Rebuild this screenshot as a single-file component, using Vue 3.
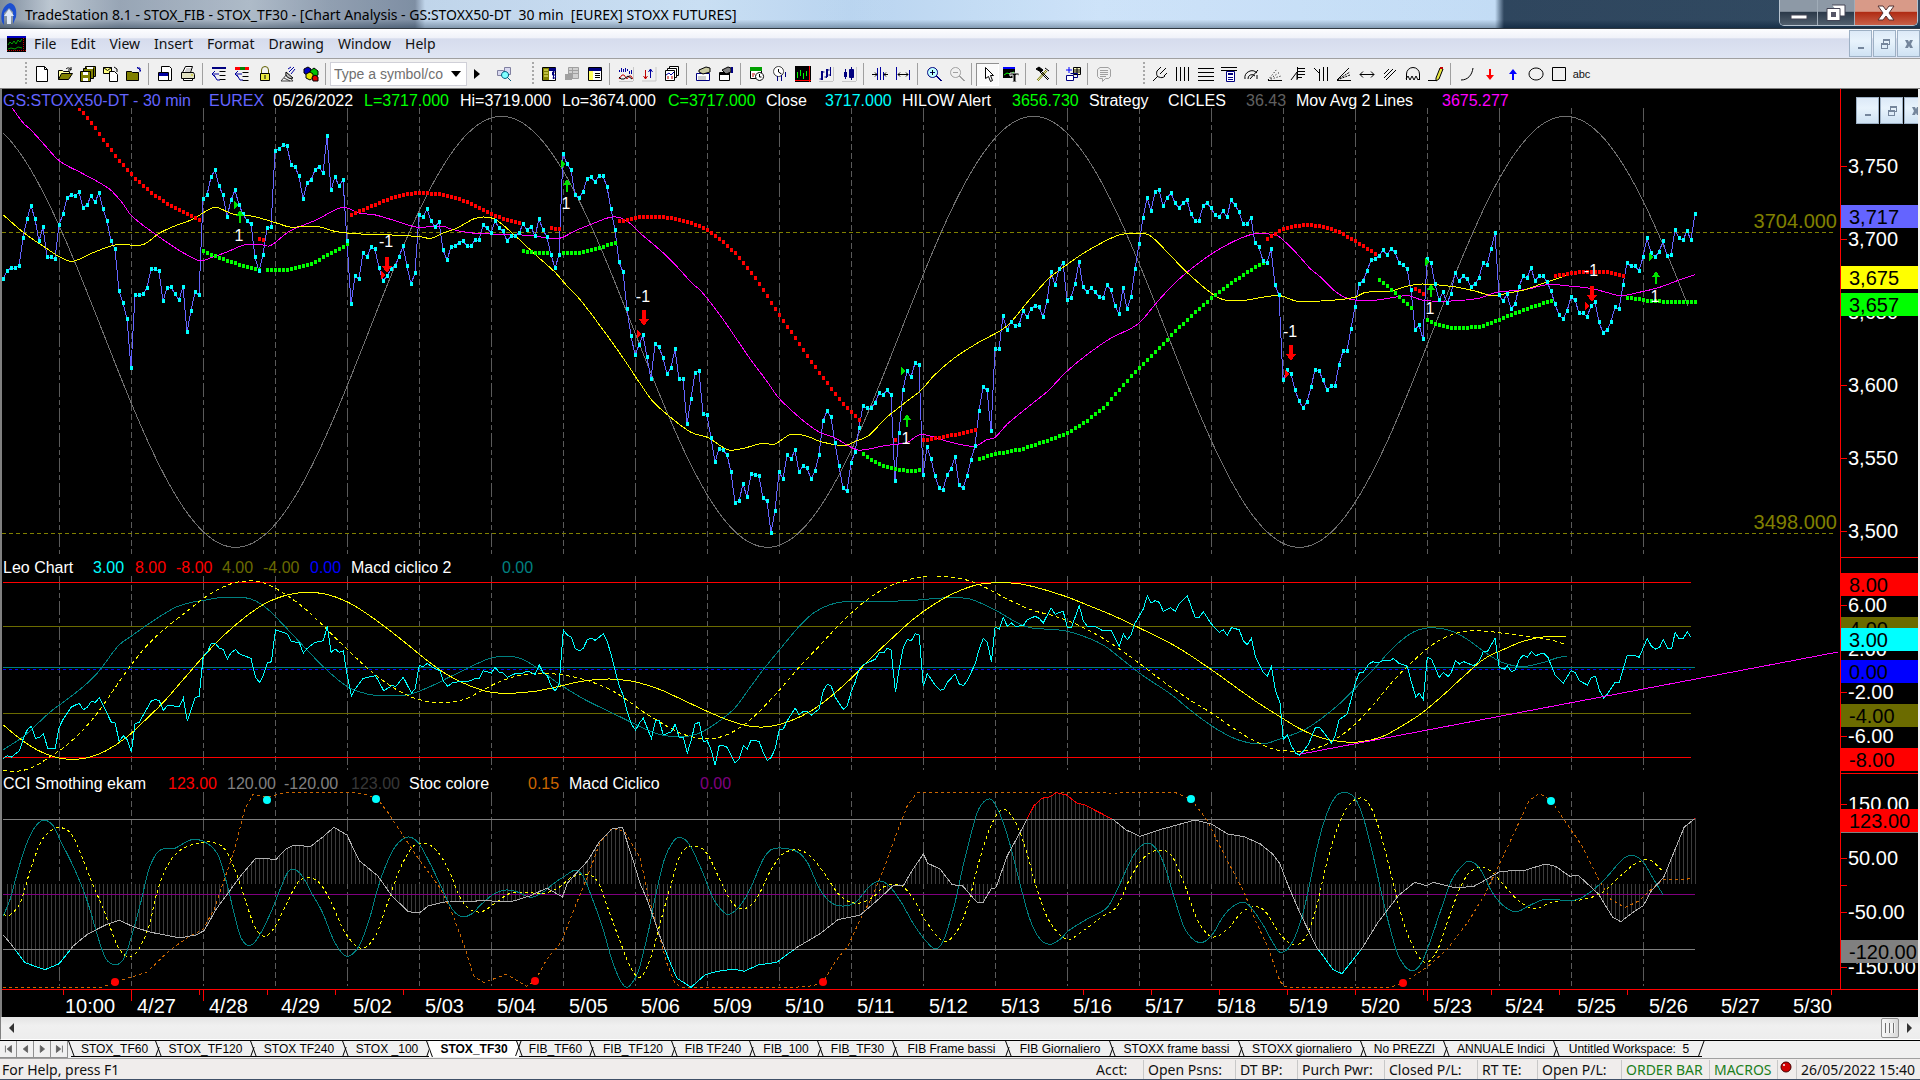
<script setup>
// Samples are stored in plotter units: 2.45 per pixel across, 3 per pixel down,
// split into sheets of 1568 units each.
const SHEET = 1568
const ux = (x, k = 0) => (x + SHEET * k) / 2.45
const BAR_START = 3
const BAR_STEP = 4

function points(top, sheets) {
  const out = []
  sheets.forEach((s, k) => {
    if (!s) return
    s.split(' ').forEach((p) => {
      const [x, y] = p.split(',').map(Number)
      out.push([ux(x, k), top + y / 3])
    })
  })
  return out
}
const r = (n) => Math.round(n * 10) / 10
const line = (pts) => 'M' + pts.map((p) => r(p[0]) + ' ' + r(p[1])).join('L')
function smooth(pts) {
  let d = 'M' + r(pts[0][0]) + ' ' + r(pts[0][1])
  for (let i = 0; i < pts.length - 1; i++) {
    const a = pts[i - 1] || pts[i]
    const b = pts[i]
    const c = pts[i + 1]
    const e = pts[i + 2] || c
    const w = (c[0] - b[0]) / 3
    const m1 = c[0] - a[0] > 0 ? (c[1] - a[1]) / (c[0] - a[0]) : 0
    const m2 = e[0] - b[0] > 0 ? (e[1] - b[1]) / (e[0] - b[0]) : 0
    d += `C${r(b[0] + w)} ${r(b[1] + m1 * w)} ${r(c[0] - w)} ${r(c[1] - m2 * w)} ${r(c[0])} ${r(c[1])}`
  }
  return d
}
function valueAt(pts, x) {
  for (let i = 0; i < pts.length - 1; i++) {
    const [x0, y0] = pts[i]
    const [x1, y1] = pts[i + 1]
    if (x >= x0 && x <= x1) return x1 === x0 ? y1 : y0 + ((y1 - y0) * (x - x0)) / (x1 - x0)
  }
  return null
}
function squares(xy) {
  return xy.map(([x, y]) => `M${Math.round(x) - 1} ${Math.round(y) - 2}h3v4h-3z`).join('')
}
function perBar(sheets) {
  const pts = points(100, sheets)
  const out = []
  for (let i = 0; i < 424; i++) {
    const x = BAR_START + BAR_STEP * i
    const y = valueAt(pts, x) ?? (Math.abs(x - pts[0][0]) < 2 ? pts[0][1] : null)
    if (y !== null) out.push([x, y])
  }
  return out
}

/* ---------- price pane ---------- */
const closes = `540 516 507 507 501 417 360 321 360 426 384 474 474 480 378 345 297 288 291 279 327 318 291 309 282 330 366 426 450 576 612 660 807 588 588 585 567 510 510 516 606 567 564 585 603 564 699 636 579 588 300 288 234 213 261 288 354 303 273 318 345 366 375 474 516 468 387 384 156 150 138 141 198 204 231 300 252 243 213 204 222 111 273 234 261 243 426 615 531 540 462 474 444 450 507 546 531 510 501 474 441 501 555 522 348 354 330 366 384 369 453 483 444 441 432 426 441 441 423 423 378 387 402 366 387 396 426 411 411 402 375 393 384 411 360 393 414 468 507 468 165 195 213 288 297 279 240 234 249 231 231 264 330 393 489 519 630 711 768 738 708 774 840 735 744 777 825 807 750 840 840 975 900 822 816 945 948 1017 1089 1050 1053 1068 1119 1212 1206 1155 1194 1125 1128 1131 1197 1206 1302 1236 1119 1140 1068 1080 1053 1119 1101 1107 1140 1116 1068 966 936 954 1032 1101 1167 1176 1092 1059 987 921 927 927 912 882 888 873 888 1146 1002 873 816 834 792 798 1128 1044 1080 1131 1167 1173 1128 1110 1074 1158 1167 1131 1083 1041 936 864 873 996 750 750 651 693 669 681 678 636 654 630 621 624 654 606 519 558 510 492 603 597 555 489 564 579 567 579 594 597 558 573 621 645 567 630 594 510 435 357 297 336 279 273 321 297 282 312 327 312 303 345 366 366 321 312 327 348 354 336 354 303 318 339 375 375 357 432 444 486 492 450 558 588 843 813 825 873 906 927 909 864 813 816 843 873 861 861 798 756 756 690 624 555 546 516 483 480 471 453 468 450 459 492 498 510 573 693 678 720 480 492 555 603 579 612 585 522 546 531 540 564 555 537 492 498 450 402 588 606 585 630 615 564 531 537 507 546 531 531 549 576 615 648 660 636 594 603 642 642 654 621 609 669 702 693 669 624 630 558 492 501 501 516 474 417 462 474 459 426 471 468 393 417 423 396 423 345`
  .split(' ')
  .map((v, i) => [BAR_START + BAR_STEP * i, 100 + Number(v) / 3])
const closePath = line(closes)
const closeDots = squares(closes)

const cyclePath = (() => {
  const pts = []
  for (let x = 8; x <= 4143; x += 12) {
    pts.push([ux(x), 100 + (698.5 - 646.5 * Math.cos((2 * Math.PI * (x - 1229)) / 1303)) / 3])
  }
  return line(pts)
})()

const slowAverage = smooth(points(100, [
  '30,27 57,72 75,92 100,125 145,185 200,222 268,270 300,312 322,350 380,405 440,455 475,478 490,486 520,475 560,457 600,437 640,437 662,440 705,400 740,380 780,360 810,340 842,325 880,342 920,348 970,366 1020,384 1085,382 1110,392 1150,401 1200,405 1250,406 1300,410 1370,418 1410,395 1450,375 1500,354 1535,365',
  '0,402 60,465 100,515 125,550 150,577 200,655 270,780 310,845 340,897 400,965 440,1000 475,1015 530,1052 560,1050 600,1040 655,1030 685,1007 720,1014 750,1026 800,1040 825,1040 850,1022 870,1015 900,975 960,915 1000,875 1045,818 1090,772 1150,720 1200,690 1225,670 1265,612 1300,565 1340,520 1400,465 1450,430 1500,406 1550,406',
  '0,415 40,462 75,510 100,535 135,577 170,600 220,605 270,597 315,590 350,604 420,606 490,597 530,580 600,572 660,556 700,560 760,568 800,580 835,590 880,580 930,565 980,542 1017,527',
]))
const fastAverage = smooth(points(100, [
  '8,348 60,403 110,445 145,473 178,487 230,460 285,437 350,437 390,403 430,380 470,362 500,340 528,325 570,345 620,352 680,373 710,384 775,382 820,397 870,404 960,408 1030,413 1055,418 1090,400 1120,387 1160,360 1185,354 1215,362 1260,408 1310,465 1360,520 1385,555 1420,600 1470,680 1520,765',
  '0,853 30,905 70,950 125,1000 165,1015 215,1052 250,1049 300,1033 330,1035 370,1006 410,1012 440,1027 500,1040 530,1026 560,1010 600,960 640,920 690,872 720,830 770,777 830,730 900,680 950,608 1000,540 1045,498 1090,460 1150,420 1185,405 1240,405 1260,420 1300,470 1340,520 1400,583 1435,604 1480,604 1530,594',
  '0,590 40,606 100,606 160,600 185,594 210,580 270,577 310,562 350,555 430,564 480,577 520,590 560,582 600,572 640,555 700,530',
]))
const highAlert = [
  ['194,30 220,66 250,118 290,183 330,238 370,282 410,315 450,340 490,364'],
  ['635,420 647,422'],
  ['860,347 900,326 950,301 990,286 1030,282 1075,286 1120,298 1160,318 1200,345 1240,362 1276,373'],
  ['1350,388 1372,390'],
  ['1516,366 1540,363 1560,356', '0,354 50,354 80,358 130,374 165,393 200,425 240,472 280,535 310,590 340,648 380,718 420,790 460,856 500,920 539,966'],
  ['', '624,1023 628,1023'],
  ['', '693,1024 730,1017 780,1005 825,992'],
  ['', '1536,419 1555,405', '0,394 30,382 70,377 110,384 150,403 185,427 220,455 236,468'],
  ['', '', '330,570 352,585'],
  ['', '', '673,532 700,525 750,518 800,520 846,531'],
].map((s) => squares(perBar(s))).join('')
const lowAlert = [
  ['497,457 540,478 580,495 637,513'],
  ['653,513 705,513 760,495 800,470 830,450 852,435'],
  ['1281,456 1310,461 1346,462'],
  ['1379,462 1420,461 1460,450 1509,431'],
  ['', '546,1066 570,1087 600,1102 635,1112 660,1117 686,1113'],
  ['', '830,1080 870,1065 930,1052 1000,1024 1047,1002 1090,970 1140,920 1200,835 1250,775 1300,710 1350,650 1400,597 1450,550 1500,510 1530,488'],
  ['', '', '242,541 280,580 323,630'],
  ['', '', '360,663 390,679 430,688 490,683 540,660 600,631 668,603'],
  ['', '', '850,596 900,605 960,609 1018,609'],
].map((s) => squares(perBar(s))).join('')

const signals = [
  { k: 0, x: 587, arrow: 352, text: 405, up: true, tri: [577, 317] },
  { k: 0, x: 1390, arrow: 257, text: 310, up: true, tri: [1380, 195] },
  { k: 0, x: 949, arrow: 495, text: 424, up: false, tri: [938, 528] },
  { k: 1, x: 10, arrow: 655, text: 587, up: false, tri: [-2, 706] },
  { k: 1, x: 655, arrow: 962, text: 1015, up: true, tri: [645, 815] },
  { k: 2, x: 28, arrow: 760, text: 692, up: false, tri: [17, 825] },
  { k: 2, x: 371, arrow: 572, text: 625, up: true, tri: [361, 490] },
  { k: 2, x: 764, arrow: 581, text: 511, up: false, tri: [752, 620] },
  { k: 2, x: 920, arrow: 535, text: 588, up: true, tri: [908, 474] },
].map((s) => {
  const x = Math.round(ux(s.x, s.k))
  const y = Math.round(100 + s.arrow / 3)
  const tx = Math.round(ux(s.tri[0], s.k))
  const ty = Math.round(100 + s.tri[1] / 3)
  return {
    color: s.up ? '#00e400' : '#ff0000',
    arrow: s.up
      ? `M${x} ${y - 6}l4 6h-3v7h-2v-7h-3z`
      : `M${x} ${y + 9}l5 -7h-3v-9h-4v9h-3z`,
    tri: `M${tx - 2} ${ty - 4}l5 4l-5 4z`,
    label: s.up ? '1' : '-1',
    left: ((x - 3) / 1838) * 100 + '%',
    top: Math.round(100 + s.text / 3) - 88 + 'px',
  }
})

/* ---------- session grid ---------- */
const sessions = Array.from({ length: 23 }, (_, i) => ({
  x: 59.5 + 72 * i,
  dash: i % 2 ? '6 3' : '14 3 5 3',
}))

/* ---------- Leo pane ---------- */
const leo = {
  macd: smooth(points(550, [
    '8,602 60,560 120,492 160,455 205,412 240,370 290,290 321,262 370,220 430,175 470,160 500,154 540,146 600,146 630,158 660,185 700,235 750,300 800,362 850,412 900,435 940,440 1000,437 1050,415 1100,385 1150,355 1200,328 1235,322 1275,328 1320,360 1370,405 1430,450 1500,492 1550,522',
    '0,533 50,557 100,563 140,555 180,528 230,480 270,415 300,365 340,305 390,232 430,188 480,162 530,157 600,157 670,154 740,147 800,148 840,165 880,190 930,225 960,237 1040,245 1100,268 1140,292 1180,330 1230,378 1300,435 1350,485 1400,530 1450,565 1490,581 1530,584',
    '0,570 60,542 100,510 150,460 190,410 230,360 270,305 310,262 340,242 375,236 420,246 460,272 500,308 540,338 590,353 640,342 680,326 702,321',
  ])),
  slow: smooth(points(550, [
    '8,528 50,570 90,602 140,626 180,631 215,626 260,605 310,565 350,520 400,460 450,390 500,320 550,257 600,205 650,163 700,139 750,130 800,136 850,158 900,195 950,240 1000,288 1050,338 1100,380 1150,410 1200,429 1250,433 1310,427 1370,412 1430,396 1490,390 1540,395',
    '0,402 50,422 100,450 170,490 220,515 270,532 320,532 370,515 420,485 470,440 520,385 570,322 620,265 670,210 720,166 770,132 820,109 860,102 920,103 970,115 1040,141 1100,170 1160,200 1220,235 1310,290 1400,362 1460,415 1510,458',
    '0,503 50,540 100,566 150,578 200,578 250,563 300,530 350,490 400,438 450,382 500,330 550,300 600,275 650,263 702,262',
  ])),
  fast: smooth(points(550, [
    '8,664 40,667 80,655 120,625 160,592 200,547 240,490 280,420 320,350 360,290 410,233 460,185 500,147 540,118 580,100 630,97 670,115 710,145 750,182 800,240 850,300 900,357 950,405 1000,440 1050,458 1090,461 1140,450 1180,425 1230,395 1280,378 1330,373 1390,380 1440,395 1500,425 1550,465',
    '0,482 50,520 100,553 150,568 200,563 250,532 290,490 340,425 390,355 440,290 490,225 540,168 590,125 640,98 700,82 750,83 800,93 840,112 900,150 960,183 1020,203 1080,232 1150,280 1220,340 1290,405 1350,455 1400,492 1450,535 1500,572 1550,600',
    '0,604 50,607 90,597 130,575 180,530 230,465 280,392 330,332 370,290 410,262 450,248 500,246 560,255 620,264 670,275 702,287',
  ])),
  value: line(points(550, [
    '8,628 18,620 28,624 48,605 58,565 68,540 77,532 87,568 97,565 106,554 117,598 135,598 145,535 155,510 175,474 194,463 204,482 214,475 224,457 234,460 243,446 253,470 273,520 282,522 292,577 302,560 312,572 322,608 331,524 341,520 371,455 381,452 390,455 400,484 410,470 440,472 449,447 459,516 478,446 488,442 498,320 508,310 517,285 527,282 537,297 547,302 557,330 567,310 577,302 587,315 615,328 626,385 636,400 645,380 655,342 665,338 675,243 694,250 704,255 714,278 733,280 743,312 753,298 772,280 792,275 802,232 811,310 821,300 831,310 841,306 851,380 861,442 870,420 890,388 920,380 940,425 960,410 970,412 988,385 1008,432 1017,420 1027,350 1037,352 1047,343 1060,355 1078,365 1087,398 1097,412 1110,400 1150,396 1165,388 1174,388 1184,365 1204,372 1213,355 1223,370 1233,372 1243,385 1262,374 1282,372 1292,366 1311,376 1321,348 1331,372 1341,380 1351,412 1360,426 1370,405 1380,243 1390,258 1400,265 1409,298 1419,306 1429,298 1439,272 1449,268 1458,274 1478,255 1488,278 1498,320 1508,370 1517,410 1527,440 1537,490 1547,525 1557,543',
    '0,520 8,508 28,568 38,515 47,515 57,558 77,548 86,526 96,565 106,565 116,612 125,575 135,525 145,520 155,578 165,575 175,605 184,648 194,590 204,590 214,595 233,642 243,630 253,590 263,600 272,574 292,577 302,612 312,634 321,626 331,600 341,543 351,540 361,515 380,477 390,497 400,487 410,487 420,498 439,480 449,425 459,406 468,410 478,445 498,481 508,470 517,430 527,400 537,360 547,348 577,330 587,310 598,310 606,298 615,302 626,430 635,360 645,295 655,272 665,275 674,254 684,258 694,412 704,374 723,408 735,424 745,420 753,400 772,375 782,405 792,410 802,395 821,345 831,300 841,268 851,280 861,338 870,235 880,240 890,205 900,232 910,222 920,232 939,230 949,212 968,202 978,208 988,222 1007,176 1017,196 1027,190 1037,188 1047,235 1057,235 1066,205 1076,170 1086,215 1096,232 1115,232 1135,246 1155,245 1174,292 1184,255 1194,272 1204,256 1213,222 1233,180 1243,140 1252,162 1262,155 1272,160 1282,187 1300,176 1311,187 1321,165 1341,140 1360,205 1370,205 1380,188 1400,225 1419,250 1429,242 1439,260 1449,236 1468,242 1478,275 1488,287 1498,268 1508,325 1527,370 1537,382 1547,352 1557,425',
    '0,462 8,572 18,557 28,590 38,612 48,618 58,605 70,585 87,535 97,536 106,548 126,582 135,560 145,512 165,495 185,400 194,372 204,370 218,344 228,338 240,342 253,334 270,335 278,328 290,342 312,352 321,395 333,445 341,432 351,452 361,325 371,330 380,355 390,386 400,370 412,383 420,370 430,335 440,345 450,338 475,350 488,336 498,308 508,308 527,268 537,355 550,360 557,350 567,368 577,362 586,332 596,318 606,325 616,308 626,320 645,312 656,324 674,378 694,402 713,365 723,370 733,395 753,408 763,385 773,382 783,425 793,447 802,435 821,400 831,400 851,318 870,320 880,325 900,268 910,292 920,300 930,295 939,272 950,298 960,298 968,250 978,270 988,268 998,248 1007,265',
  ])),
  trend: line(points(550, ['', '', '48,616 1367,309'])),
}

/* ---------- CCI pane ---------- */
const cciPoints = points(550, [
  '8,1158 30,1190 60,1240 90,1254 110,1262 145,1244 180,1190 215,1155 260,1127 292,1114 330,1135 370,1150 440,1167 480,1158 500,1145 530,1080 560,1030 590,980 625,930 650,927 675,933 700,900 720,888 760,893 790,865 818,835 850,858 880,935 925,980 960,1040 1000,1088 1027,1092 1050,1070 1100,1056 1160,1058 1175,1054 1250,1059 1300,1040 1340,1017 1378,1044 1390,1003 1410,975 1440,935 1470,875 1500,840 1525,835 1550,930',
  '0,1003 20,1060 45,1150 70,1230 90,1287 125,1315 160,1277 190,1267 230,1260 255,1267 290,1248 335,1240 385,1195 440,1155 485,1112 540,1098 590,1045 620,1010 645,1010 665,968 694,915 705,943 735,960 765,1007 790,1010 825,1059 840,1062 860,1020 872,1016 900,920 940,830 965,770 985,748 1005,743 1020,731 1045,738 1070,762 1090,768 1160,812 1190,842 1225,862 1280,840 1360,813 1400,825 1440,855 1480,863 1520,885 1550,915',
  '0,945 20,1010 50,1095 90,1195 130,1262 152,1274 200,1200 240,1120 290,1040 330,1000 360,1010 375,1000 430,1017 475,1012 500,995 540,967 600,964 650,945 675,952 710,982 730,978 780,1035 815,1105 835,1118 865,1090 890,1070 910,1025 940,985 965,910 990,835 1017,808',
])
const cci = {
  value: line(cciPoints),
  bars: closes
    .map(([x]) => {
      const y = valueAt(cciPoints, x)
      return y === null ? '' : `M${x + 0.5} 885V${Math.round(y)}`
    })
    .join(''),
  macd: smooth(points(550, [
    '8,1100 25,1050 45,960 65,885 85,835 107,814 130,830 150,880 175,940 200,1010 220,1080 240,1165 260,1230 285,1247 305,1225 325,1150 345,1060 365,960 390,905 430,897 460,876 480,871 510,885 535,920 555,1000 575,1100 590,1165 610,1190 630,1170 660,1100 690,1010 705,970 720,961 740,980 765,1035 790,1090 820,1180 850,1222 880,1190 905,1110 925,1020 945,950 970,890 1000,864 1025,882 1050,935 1080,1010 1105,1075 1130,1103 1155,1095 1180,1065 1210,1035 1240,1023 1270,1030 1300,1045 1330,1030 1355,1005 1385,980 1410,964 1430,985 1450,1045 1475,1130 1500,1235 1520,1295 1537,1315 1555,1290',
    '0,1250 20,1150 40,1030 60,930 80,880 97,865 120,885 150,960 180,1050 205,1090 220,1096 245,1070 270,1020 300,935 320,903 345,897 385,908 410,940 440,1020 470,1062 500,1071 530,1058 560,1015 585,996 610,1010 640,1060 670,1125 700,1175 725,1200 745,1170 770,1070 790,960 810,860 830,780 858,750 880,790 905,880 930,1000 955,1110 980,1170 1005,1186 1030,1170 1050,1145 1100,1107 1145,1075 1170,1020 1200,940 1220,900 1243,882 1265,900 1285,950 1310,1050 1335,1140 1370,1181 1400,1160 1430,1100 1455,1070 1480,1060 1500,1080 1530,1135 1550,1180',
    '0,1210 25,1190 50,1120 70,1020 90,900 110,810 135,745 160,730 185,750 205,810 230,930 250,1040 270,1140 290,1220 320,1265 345,1245 370,1170 395,1080 420,995 450,945 467,937 490,960 520,1030 550,1073 580,1088 610,1070 650,1051 720,1054 760,1030 800,985 840,930 865,919 890,940 915,990 938,1036',
  ])),
  signal: smooth(points(550, [
    '8,1097 25,1097 50,1060 75,960 100,880 125,845 145,835 175,855 200,920 225,1000 250,1070 270,1135 290,1195 315,1224 340,1200 365,1130 385,1030 410,950 440,905 480,884 520,880 550,900 575,960 600,1050 625,1135 650,1162 675,1130 700,1070 730,1000 757,986 785,1005 815,1070 845,1150 885,1198 920,1160 950,1060 980,960 1010,895 1040,883 1070,905 1100,965 1125,1040 1150,1080 1180,1088 1210,1065 1250,1033 1290,1030 1330,1034 1370,1015 1400,985 1440,976 1465,1000 1490,1080 1520,1180 1545,1255',
    '0,1285 25,1230 50,1120 75,1010 100,915 135,891 165,915 195,990 225,1060 255,1079 285,1050 320,965 350,915 390,903 420,925 450,970 490,1040 530,1063 570,1045 600,1012 640,1010 670,1050 700,1115 745,1177 780,1140 805,1060 830,940 860,830 890,781 920,820 945,900 970,1010 1000,1110 1045,1171 1080,1150 1130,1105 1170,1070 1200,990 1235,925 1275,903 1305,925 1335,1010 1365,1110 1400,1163 1440,1140 1470,1095 1500,1074 1530,1085',
    '0,1155 35,1188 65,1160 90,1070 115,940 140,840 165,775 198,747 225,780 250,870 275,990 300,1110 325,1190 355,1240 385,1205 410,1120 440,1020 465,970 495,955 520,970 550,1010 580,1050 620,1079 670,1058 740,1052 790,1030 830,985 870,945 905,933 938,966',
  ])),
  stoch: line(points(550, [
    '8,1315 250,1315 282,1300 320,1285 360,1270 410,1210 460,1165 498,1140 525,1080 550,990 575,900 600,780 620,735 655,745 700,730 860,730 900,738 925,750 950,790 980,845 1020,920 1050,970 1080,1020 1110,1100 1140,1200 1160,1280 1185,1301 1240,1276 1290,1312 1311,1295 1340,1230 1375,1180 1410,1070 1440,980 1470,880 1500,838 1530,848',
    '0,925 20,1040 45,1150 65,1240 85,1300 100,1315 380,1315 425,1310 449,1298 480,1235 510,1190 540,1110 570,1040 600,950 630,850 655,770 680,730 1120,730 1160,733 1200,730 1310,730 1350,750 1390,815 1420,890 1450,960 1480,1030 1510,1120 1540,1200',
    '0,1297 12,1312 30,1315 270,1315 302,1302 360,1255 410,1200 460,1120 500,1040 540,940 580,835 610,755 635,733 665,755 700,820 740,890 780,990 810,1050 845,1076 880,1055 910,1020 940,990 990,993 1007,987',
  ])),
  dots: [
    [0, 655, 752, '#00ffff'], [0, 920, 749, '#00ffff'], [1, 1350, 749, '#00ffff'], [2, 665, 755, '#00ffff'],
    [0, 282, 1299, '#ff0000'], [0, 1311, 1296, '#ff0000'], [1, 449, 1299, '#ff0000'], [2, 302, 1302, '#ff0000'],
  ].map(([k, x, y, color]) => ({ x: Math.round(ux(x, k)), y: Math.round(550 + y / 3), color })),
}

/* ---------- pane headings ---------- */
const priceInfo = [
  ['GS:STOXX50-DT - 30 min', '#6464ff'], ['EUREX', '#6464ff'], ['05/26/2022', '#ffffff'],
  ['L=3717.000', '#00ff00'], ['Hi=3719.000', '#ffffff'], ['Lo=3674.000', '#ffffff'],
  ['C=3717.000', '#00ff00'], ['Close', '#ffffff'], ['3717.000', '#00ffff'], ['HILOW Alert', '#ffffff'],
  ['3656.730', '#00ff00'], ['Strategy', '#ffffff'], ['CICLES', '#ffffff'], ['36.43', '#606060'],
  ['Mov Avg 2 Lines', '#ffffff'], ['3675.277', '#ff00ff'],
]
const leoInfo = [
  ['Leo Chart', '#ffffff'], ['3.00', '#00ffff'], ['8.00', '#ff0000'], ['-8.00', '#ff0000'],
  ['4.00', '#6b6b00'], ['-4.00', '#6b6b00'], ['0.00', '#0000ff'], ['Macd ciclico 2', '#ffffff'], ['0.00', '#008080'],
]
const cciInfo = [
  ['CCI Smothing ekam', '#ffffff'], ['123.00', '#ff0000'], ['120.00', '#808080'], ['-120.00', '#808080'],
  ['123.00', '#383838'], ['Stoc colore', '#ffffff'], ['0.15', '#cc6600'], ['Macd Ciclico', '#ffffff'], ['0.00', '#800080'],
]

/* ---------- value axes: y from the top of the pane ---------- */
const priceScale = [[77, '3,750'], [150, '3,700'], [223, '3,650'], [296, '3,600'], [369, '3,550'], [442, '3,500']]
const priceTags = [[128, '3,717', '#6464ff'], [189, '3,675', '#ffff00'], [216, '3,657', '#00ff00']]
const leoScale = [[47, '6.00'], [91, '2.00'], [134, '-2.00'], [178, '-6.00']]
const leoTags = [
  [27, '8.00', '#ff0000'], [71, '4.00', '#6b6b00'], [82, '3.00', '#00ffff'],
  [114, '0.00', '#0000ff'], [158, '-4.00', '#6b6b00'], [202, '-8.00', '#ff0000'],
]
const cciScale = [[30, '150.00'], [84, '50.00'], [111, ''], [138, '-50.00'], [166, ''], [193, '-150.00']]
const cciTags = [[48, '120.00', '#808080'], [47, '123.00', '#ff0000'], [178, '-120.00', '#808080']]
const axes = { price: [priceScale, priceTags], leo: [leoScale, leoTags], cci: [cciScale, cciTags] }

const dates = ['10:00', '4/27', '4/28', '4/29', '5/02', '5/03', '5/04', '5/05', '5/06', '5/09', '5/10', '5/11', '5/12', '5/13', '5/16', '5/17', '5/18', '5/19', '5/20', '5/23', '5/24', '5/25', '5/26', '5/27', '5/30']
const timeTicks =
  [63, 199, 267, 335, 403, 1083, 1151, 1219, 1287, 1355, 1423, 1491, 1559, 1627, 1831].map((x) => `M${x + 0.5} 0v5`).join('') +
  [131, 203, 1427].map((x) => `M${x + 0.5} 0v11`).join('')

/* ---------- window chrome ---------- */
const menus = ['File', 'Edit', 'View', 'Insert', 'Format', 'Drawing', 'Window', 'Help']

// Every icon is a list of [path, fill, stroke] on a 16 x 16 grid.
const K = '#000'
const B = '#000080'
const G = '#a0a0a0'
const magnifier = (c, glass) => [
  ['M6.5 1.5a5 5 0 1 0 .1 0z', glass, c], ['M10 10l5 5', 'none', c], ['M11 10l5 5', 'none', c], ['M4 6.5h5', 'none', c],
]
const icons = {
  new: [['M2.5 .5h8l3 3v12h-11z', '#fff', K], ['M10.5 .5v3h3', 'none', K]],
  open: [['M1.5 13.5v-9h4l1 1h6v2', '#ffffa0', K], ['M1.5 13.5l3-6h11l-4 6z', '#808000', K], ['M9 3c2-2 4-1 5 1m0-3v3h-3', 'none', K]],
  saveAll: [['M5.5 .5h10v10h-10z', '#808000', K], ['M3.5 2.5h10v10h-10z', '#808000', K], ['M.5 5.5h10v10h-10z', '#808000', K], ['M3 6h5v3h-5zM3 12h5v3h-5z', '#fff', 'none'], ['M7 1h6v2h-6z', '#fff', 'none']],
  mailDoc: [['M.5 1.5h8v6h-8z', '#ffff80', K], ['M.5 1.5l4 3l4-3', 'none', K], ['M6.5 5.5h5l3 3v7h-8z', '#fff', K], ['M11 1l3 2v3', 'none', K]],
  folderUp: [['M.5 5.5h5l1 1h6v8h-12z', '#808000', K], ['M11 2h3v4M11 1l4 4', 'none', '#0000a0']],
  window: [['M4.5 .5h8l2 2v12h-10z', '#fff', K], ['M1.5 6.5h10v8h-10z', '#fff', K], ['M2 7h9v3h-9z', '#0000a0', 'none']],
  print: [['M5.5 .5h7l-2 6h-8z', '#fff', K], ['M1.5 6.5h12l1 2v4h-13z', '#e0e0c0', K], ['M3.5 12.5h9v2h-9z', '#fff', K], ['M6 3h5M5 5h5', 'none', G], ['M11 9h2', 'none', '#c0c000']],
  insertBar: [['M1 1h14v2h-14z', B, 'none'], ['M8.500 5.500h6M8.500 9.500h6M8.500 13.500h6', 'none', K], ['M8 8h-7m3-3l-3 3l3 3M3 9l3 5h3', 'none', '#0000a0']],
  insertColor: [['M1 1h5v3h-5z', '#ff0000', 'none'], ['M6 1h5v3h-5z', '#008000', 'none'], ['M11 1h4v3h-4z', '#ff0000', 'none'], ['M8.500 6.500h6M8.500 10.500h6M8.500 14.500h6', 'none', K], ['M8 8h-7m3-3l-3 3l3 3M3 9l3 5h3', 'none', '#0000a0']],
  lock: [['M4.500 8v-4a3.500 3.500 0 0 1 7 0v4', 'none', '#606000'], ['M3.500 7.500h9v7h-9z', '#e8e840', K], ['M8 9v4', 'none', K]],
  dish: [['M1 15l6-7l6 7zM4 12l6 3', 'none', '#404040'], ['M6 6a5 5 0 0 0 7 6z', '#c0c0c0', K], ['M9 6l5-5M11 8l4-5M8 3l3-2', 'none', '#0000a0']],
  cubes: [['M1 3l4-2l3 2v4l-4 2l-3-2z', '#0000c0', K], ['M7 5l4-3l4 3v4l-4 2l-4-2z', '#00c000', K], ['M3 8l4-2l3 2v4l-3 2l-4-2z', '#e8e800', K], ['M9 11l3-2l3 2v4h-5z', '#e00000', K]],
  find: [['M1.500 4.500h6v5h-6zM8.500 1.500h6v7h-6z', '#d8d8f0', '#8080a0'], ['M9 5.500a3.500 3.500 0 1 0 .1 0z', '#80ffff', '#006080'], ['M11 11l4 4', 'none', '#006080']],
  money: [['M1.500 1.500h13v13h-13z', '#fff', K], ['M2 2h6v12h-6z', '#808000', 'none'], ['M8 2h7v3h-7z', B, 'none'], ['M12.500 5v8m2-7h-3v3h3v3h-3', 'none', B], ['M3 4h4M3 7h4M3 10h4', 'none', '#ffff80']],
  gridOff: [['M4.500 1.500h10v11h-10z', '#d0d0d0', G], ['M4 4.500h10M4 7.500h10M8.500 1v12', 'none', G], ['M1 8h7v6h-7z', G, 'none']],
  sheet: [['M1.500 1.500h13v13h-13z', '#fff', K], ['M2 2h12v3h-12z', B, 'none'], ['M2 5h4v9h-4z', '#ffff60', 'none'], ['M8 7.500h5M8 9.500h5M8 11.500h5', 'none', K]],
  indicator: [['M1.500 6v-2m2 2v-4m2 4v-3m2 3v-4m2 3v-2m2 5v-3m2 3v-4', 'none', '#0000a0'], ['M1 13l3-4h2l3 4l2-3h2l2 3', 'none', '#c00000'], ['M1 11l2 2h3l4-3l4 3', 'none', K], ['M1 15.500h14M15.500 1v14', 'none', '#c8c8c8']],
  strategy: [['M4.500 4v9m-2-3l2 3l2-3', 'none', '#c00000'], ['M9.500 12v-9m-2 3l2-3l2 3', 'none', '#0000a0'], ['M1 15h14M15 1v14', 'none', '#c8c8c8']],
  layers: [['M5.500 .5h9v9h-9z', '#fff', K], ['M3.500 2.500h9v9h-9z', '#fff', K], ['M1.500 4.500h9v10h-9z', '#fff', K], ['M2 9l3-2l2 2l3-3', 'none', '#0000a0'], ['M4 13v-3m4 3v-3', 'none', '#c00000']],
  formatA: [['M1.500 7.500h13v7h-13z', '#fff', B], ['M4 4l7-3l4 1v4l-7 2l-4-2z', '#c8c8a0', K], ['M3 11h8M3 13h8', 'none', G]],
  formatB: [['M1.500 6.500h10v8h-10z', '#fff', K], ['M2 7h9v2h-9z', K, 'none'], ['M4 4l6-3l3 1v4l-5 2z', '#808080', K], ['M13 1h2v6h-2z', B, 'none']],
  calendar: [['M1.500 2.500h11v10h-11z', '#fff', K], ['M1 1h12v4h-12z', '#00a000', 'none'], ['M10.500 6.500a4 4 0 1 0 .1 0z', '#fff', K], ['M10.500 8v3h2', 'none', K], ['M3 8h3M3 10h2', 'none', '#c00000']],
  clock: [['M6.500 .500a5 5 0 1 0 .1 0z', '#fff', '#404040'], ['M6.500 3v3l3 2', 'none', K], ['M5.500 10v5m4-6v6m4-9v5', 'none', B]],
  blackChart: [['M0 0h16v16h-16z', K, 'none'], ['M2.500 6v6m3-8v6m3-3v6m3-8v5', 'none', '#00ff00'], ['M0 14.500h16M14.500 0v16', 'none', '#ff0000']],
  ohlc: [['M3.500 5v9m-2-1h2m0-7h3M8.500 3v9m-2-1h2m0-7h3M12.500 1v9m-2-1h2', 'none', B], ['M4.500 5v9M9.500 3v8', 'none', B], ['M1 15.500h14M15.500 1v14', 'none', '#c8c8c8']],
  candle: [['M4.500 3v10M10.500 1v13', 'none', B], ['M3 6h3v5h-3z', B, 'none'], ['M8.500 3.500h4v8h-4z', B, B], ['M1 15.500h14M15.500 1v14', 'none', '#c8c8c8']],
  squeeze: [['M5.500 2v12M8.500 1v13M11.500 6v8', 'none', '#0000a0'], ['M0 8.500h5m-2-2l2 2l-2 2M16 8.500h-4m2-2l-2 2l2 2', 'none', K]],
  spread: [['M1.500 1v13M14.500 4v10', 'none', '#0000a0'], ['M3 8.500h10m-8-2l-2 2l2 2m6-4l2 2l-2 2', 'none', K]],
  zoomIn: [...magnifier(B, '#c0ffff'), ['M6.500 4v5', 'none', K]],
  zoomOut: magnifier(G, '#f0f0f0'),
  pointer: [['M5.500 1.500v11l3-2l2 5l2-1l-2-5h3z', '#fff', K]],
  chartText: [['M0 1h12v11h-12z', K, 'none'], ['M0 1h12v2h-12z', '#0000ff', 'none'], ['M1 9l3-2l3 1l4-2', 'none', '#00ff00'], ['M7 7h9v3h-1v-1h-2v6h1v1h-5v-1h1v-6h-2v1h-1z', K, '#f0f0f0']],
  hammer: [['M3 14l9-10', 'none', '#808000'], ['M4 15l9-10', 'none', '#808000'], ['M2 3l3-2l4 3l-2 2z', K, K], ['M6 6l8 8M7 5l8 8', 'none', K], ['M11 2l4 3', 'none', K]],
  addTable: [['M1 4h6M4 1v6', 'none', '#0000ff'], ['M8.500 1.500h7v7h-7z', '#ffffc0', K], ['M8 4h8M8 6h8M12 1v8', 'none', K], ['M1.500 9.500h7v5h-7z', '#fff', B], ['M5.500 7.500h7v4h-4', 'none', B]],
  noteOff: [['M4 1.500h8l2.500 2v7l-2 2h-3l-3 3v-3h-3l-2-2v-7z', '#f0f0f0', G], ['M4 4.500h8M4 6.500h8M4 8.500h8M4 10.500h6', 'none', G]],
  fork: [['M1 15l5-5m-1-5c-1 3 0 6 2 6c2 1 4 1 6-1M8 8l6-6M5 5l4-4M12 10l3-3', 'none', K]],
  vlines: [['M1.500 1v14m4-14v14m4-14v14m4-14v14', 'none', K]],
  hlines: [['M0 2.500h16M0 6.500h16M0 10.500h16M0 14.500h16', 'none', K]],
  calcLines: [['M0 1.500h16M0 4.500h16', 'none', K], ['M5.500 5.500h8v10h-8z', '#fff', B], ['M7 7h5v2h-5z', B, 'none'], ['M7 11.500h5M7 13.500h5', 'none', B]],
  arcs: [['M1 13a7 7 0 0 1 12-6M4 13a4 4 0 0 1 7-3M13 9v4M6 13l8-9', 'none', K]],
  fan: [['M1 14.500h14', 'none', K], ['M1 14l13-4M1 14l12-8M1 14l9-11', 'none', K, '1 2']],
  flagLines: [['M1 14l6-8v8', 'none', K], ['M8 2.500h7M8 5.500h7M8 8.500h7M8 11.500h4M7.500 1v12', 'none', K]],
  timeLines: [['M1 2l5 5M6.500 3v12M10.500 1v14M14.500 1v14', 'none', K]],
  angle: [['M1 14.500h14M1 14l12-12', 'none', K], ['M1 14l13-5M1 14l13-8', 'none', K, '2 1']],
  hArrow: [['M1 8.500h14m-11-3l-3 3l3 3m8-6l3 3l-3 3', 'none', K]],
  parallels: [['M2 12l9-9M4 14l10-10M2 8l5-5', 'none', K]],
  ghost: [['M1.500 14v-6a6.500 6.500 0 0 1 13 0v6M1 13l2-3l2 4l2-4l2 4l2-4l2 4l2-2', 'none', K]],
  pencil: [['M0 14.500h8', 'none', K], ['M8 12l4-10l3 1l-4 10l-3 2z', '#e8e840', K], ['M12 1h3v2h-3z', '#c00000', 'none']],
  arc: [['M2 14c7 0 11-5 12-12', 'none', K]],
  down: [['M7 3h2v6h3l-4 5l-4-5h3z', '#ff0000', 'none']],
  up: [['M7 14h2v-6h3l-4-5l-4 5h3z', '#0000ff', 'none']],
  ellipse: [['M8 2a7 6 0 1 0 .1 0z', 'none', K]],
  rect: [['M1.500 1.500h13v13h-13z', 'none', K]],
}
const toolsFile = [
  ['new', 'open', 'saveAll', 'mailDoc', 'folderUp'], ['window', 'print'],
  ['insertBar', 'insertColor', 'lock', 'dish', 'cubes'],
]
const toolsChart = [
  ['money', 'gridOff', 'sheet'], ['indicator', 'strategy', 'layers'], ['formatA', 'formatB'],
  ['calendar', 'clock', 'blackChart', 'ohlc', 'candle'], ['squeeze', 'spread'], ['zoomIn', 'zoomOut'],
  ['pointer', 'chartText'], ['hammer'], ['addTable'], ['noteOff'],
]
const toolsDraw = [
  ['fork', 'vlines', 'hlines', 'calcLines', 'arcs', 'fan', 'flagLines', 'timeLines', 'angle', 'hArrow', 'parallels', 'ghost', 'pencil'],
  ['arc', 'down', 'up', 'ellipse', 'rect', 'abc'],
]
const toolbars = [toolsFile, toolsChart, toolsDraw]

const mdiButtons = [
  ['Minimize', 'M4 10h6v2h-6z'],
  ['Restore', 'M5 2h7v6h-2v4h-7v-6h2zM6 4v2h4v1h1v-3zM4 8v3h5v-3z'],
  ['Close', 'M3 3h3l1 2l1-2h3l-2 4l2 4h-3l-1-2l-1 2h-3l2-4z'],
]
const tabNav = ['M4 3v8M11 3l-5 4l5 4z', 'M10 3l-5 4l5 4z', 'M5 3l5 4l-5 4z', 'M11 3v8M4 3l5 4l-5 4z']
const tabs = [
  ['STOX_TF60', 87], ['STOX_TF120', 95], ['STOX TF240', 92], ['STOX _100', 84], ['STOX_TF30', 90], ['FIB_TF60', 73],
  ['FIB_TF120', 82], ['FIB TF240', 78], ['FIB_100', 68], ['FIB_TF30', 75], ['FIB Frame bassi', 113], ['FIB Giornaliero', 104],
  ['STOXX frame bassi', 129], ['STOXX giornaliero', 122], ['No PREZZI', 83], ['ANNUALE Indici', 110], ['Untitled Workspace:  5', 146],
]
const account = ['Acct:', 'Open Psns:', 'DT BP:', 'Purch Pwr:', 'Closed P/L:', 'RT TE:', 'Open P/L:']
</script>

<template>
  <div class="app">
    <header class="titlebar">
      <svg class="logo" viewBox="0 0 18 24" aria-hidden="true">
        <path d="M2 20C0 12 3 3 10 1c5 1 7 6 6 14l-3 7V10L9 6l-5 5v12z" fill="#1c4fd0" />
        <path d="M9 7l5 7h-3v8H7v-8H4z" fill="#dfe9f8" />
      </svg>
      <h1>TradeStation 8.1 - STOX_FIB - STOX_TF30 - [Chart Analysis - GS:STOXX50-DT&nbsp; 30 min&nbsp; [EUREX] STOXX FUTURES]</h1>
      <div class="caption-buttons">
        <button type="button" class="cap min" aria-label="Minimize"><svg viewBox="0 0 20 18"><path d="M2 11h16v4H2z" fill="#fff" stroke="#445" /></svg></button>
        <button type="button" class="cap max" aria-label="Restore"><svg viewBox="0 0 20 18"><path d="M6 1h13v11h-4M1 4.500h13v12H1z" fill="#fff" stroke="#445" /><path d="M5 8h5v5H5z" fill="#556" /></svg></button>
        <button type="button" class="cap close" aria-label="Close"><svg viewBox="0 0 20 18"><path d="M2 2h5l3 4l3-4h5l-5 7l5 7h-5l-3-4l-3 4H2l5-7z" fill="#fff" stroke="#533" /></svg></button>
      </div>
    </header>

    <nav class="menubar">
      <svg class="chart-icon" viewBox="0 0 19 16" aria-hidden="true">
        <path d="M0 0h19v16H0z" fill="#000" /><path d="M0 0h19v2H0z" fill="#0000c0" />
        <path d="M1 9l2-3l2 2l2-3l2 3l2-4l2 2l2-3M1 13l3-1l4 1l3-2l4 1" fill="none" stroke="#00a000" />
        <path d="M0 14.500h19M16.500 2v14" stroke="#c00000" stroke-dasharray="1 1" />
      </svg>
      <button v-for="m in menus" :key="m" type="button">{{ m }}</button>
      <span class="mdi">
        <button v-for="b in mdiButtons" :key="b[0]" type="button" :aria-label="b[0]">
          <svg viewBox="0 0 14 14"><path :d="b[1]" fill="#75869c" fill-rule="evenodd" /></svg>
        </button>
      </span>
    </nav>

    <div class="toolbar" role="toolbar" aria-label="Main">
      <template v-for="(bar, bi) in toolbars" :key="bi">
        <span class="grip"></span>
        <template v-for="(group, gi) in bar" :key="gi">
          <span v-if="gi" class="sep"></span>
          <button v-for="name in group" :key="name" type="button" class="tool" :class="{ pressed: name === 'pointer' }" :aria-label="name">
            <span v-if="name === 'abc'" class="abc">abc</span>
            <svg v-else viewBox="0 0 16 16">
              <path v-for="(s, si) in icons[name]" :key="si" :d="s[0]" :fill="s[1]" :stroke="s[2]" :stroke-dasharray="s[3]" />
            </svg>
          </button>
        </template>
        <template v-if="bi === 0">
          <span class="sep"></span>
          <span class="symbol">
            <input type="text" aria-label="Symbol" placeholder="Type a symbol/co" />
            <button type="button" aria-label="Symbol list"><svg viewBox="0 0 10 6"><path d="M0 0h10l-5 6z" fill="#000" /></svg></button>
          </span>
          <button type="button" class="go" aria-label="Go"><svg viewBox="0 0 6 10"><path d="M0 0l6 5l-6 5z" fill="#000" /></svg></button>
          <button type="button" class="tool" aria-label="find">
            <svg viewBox="0 0 16 16"><path v-for="(s, si) in icons.find" :key="si" :d="s[0]" :fill="s[1]" :stroke="s[2]" /></svg>
          </button>
        </template>
        <span v-if="bi < 2" :class="bi ? 'gap-wide' : 'gap'"></span>
      </template>
    </div>

    <main class="chart">
      <section class="pane">
        <div class="plot">
          <p class="info price-info"><span v-for="(t, i) in priceInfo" :key="i" :style="{ color: t[1] }">{{ t[0] }}</span></p>
          <svg class="price-svg" viewBox="2 109 1838 449" preserveAspectRatio="none">
            <line v-for="s in sessions" :key="s.x" :x1="s.x" :x2="s.x" y1="109" y2="555" stroke="#5a5a5a" :stroke-dasharray="s.dash" />
            <path d="M2 233.500H1836M2 534.500H1836" class="ln" stroke="#808000" stroke-dasharray="4 3" />
            <path :d="cyclePath" class="ln" stroke="#707070" />
            <path :d="closePath" class="ln" stroke="#6464ff" />
            <path :d="slowAverage" class="ln" stroke="#ff00ff" />
            <path :d="fastAverage" class="ln" stroke="#ffff00" />
            <path :d="highAlert" fill="#ff0000" />
            <path :d="lowAlert" fill="#00ff00" />
            <path :d="closeDots" fill="#00ffff" />
            <g v-for="(s, i) in signals" :key="i" :fill="s.color"><path :d="s.arrow" /><path :d="s.tri" /></g>
          </svg>
          <span v-for="(s, i) in signals" :key="i" class="signal" :style="{ left: s.left, top: s.top }">{{ s.label }}</span>
          <span class="level high">3704.000</span>
          <span class="level low">3498.000</span>
        </div>
        <div class="axis">
          <span v-for="l in axes.price[0]" :key="l[0]" class="tick" :style="{ top: l[0] + 'px' }">{{ l[1] }}</span>
          <span v-for="l in axes.price[1]" :key="l[0]" class="tag" :style="{ top: l[0] + 'px', background: l[2] }">{{ l[1] }}</span>
        </div>
      </section>

      <section class="pane">
        <div class="plot">
          <p class="info leo-info"><span v-for="(t, i) in leoInfo" :key="i" :style="{ color: t[1] }">{{ t[0] }}</span></p>
          <svg class="study-svg" viewBox="2 577 1838 197" preserveAspectRatio="none">
            <line v-for="s in sessions" :key="s.x" :x1="s.x" :x2="s.x" y1="577" y2="771" stroke="#5a5a5a" :stroke-dasharray="s.dash" />
            <path d="M3 583.500H1691M3 758.500H1691" class="ln" stroke="#ff0000" />
            <path d="M3 627.500H1691M3 714.500H1691" class="ln" stroke="#6b6b00" />
            <path d="M3 668.500H1695" class="ln" stroke="#008080" />
            <path d="M3 670.500H1691" class="ln" stroke="#0000ff" stroke-dasharray="3 3" />
            <path :d="leo.macd" class="ln" stroke="#008080" />
            <path :d="leo.fast" class="ln" stroke="#ffff00" stroke-dasharray="4 3" />
            <path :d="leo.slow" class="ln" stroke="#ffff00" />
            <path :d="leo.value" class="ln" stroke="#00ffff" />
            <path :d="leo.trend" class="ln" stroke="#ff00ff" />
          </svg>
        </div>
        <div class="axis">
          <span v-for="l in axes.leo[0]" :key="l[0]" class="tick" :style="{ top: l[0] + 'px' }">{{ l[1] }}</span>
          <span v-for="l in axes.leo[1]" :key="l[0]" class="tag" :style="{ top: l[0] + 'px', background: l[2] }">{{ l[1] }}</span>
        </div>
      </section>

      <section class="pane">
        <div class="plot">
          <p class="info cci-info"><span v-for="(t, i) in cciInfo" :key="i" :style="{ color: t[1] }">{{ t[0] }}</span></p>
          <svg class="study-svg" viewBox="2 793 1838 197" preserveAspectRatio="none">
            <defs>
              <clipPath id="over"><rect x="0" y="780" width="1840" height="40" /></clipPath>
              <clipPath id="within"><rect x="0" y="820" width="1840" height="131" /></clipPath>
              <clipPath id="under"><rect x="0" y="951" width="1840" height="40" /></clipPath>
            </defs>
            <line v-for="s in sessions" :key="s.x" :x1="s.x" :x2="s.x" y1="793" y2="987" stroke="#5a5a5a" :stroke-dasharray="s.dash" />
            <path :d="cci.bars" class="ln" stroke="#3c3c3c" />
            <path d="M3 820.500H1695M3 950.500H1695" class="ln" stroke="#808080" />
            <path d="M3 895.500H1695" class="ln" stroke="#800080" />
            <path :d="cci.stoch" class="ln" stroke="#cc6600" stroke-dasharray="3 3" />
            <path :d="cci.signal" class="ln" stroke="#ffff00" stroke-dasharray="3 3" />
            <path :d="cci.macd" class="ln" stroke="#008080" />
            <path :d="cci.value" class="ln" stroke="#b0b0b0" clip-path="url(#within)" />
            <path :d="cci.value" class="ln" stroke="#ff0000" clip-path="url(#over)" />
            <path :d="cci.value" class="ln" stroke="#00ffff" clip-path="url(#under)" />
            <circle v-for="(c, i) in cci.dots" :key="i" :cx="c.x" :cy="c.y" r="4" :fill="c.color" />
          </svg>
        </div>
        <div class="axis">
          <span v-for="l in axes.cci[0]" :key="l[0]" class="tick" :style="{ top: l[0] + 'px' }">{{ l[1] }}</span>
          <span v-for="l in axes.cci[1]" :key="l[0]" class="tag" :style="{ top: l[0] + 'px', background: l[2] }">{{ l[1] }}</span>
        </div>
      </section>

      <div class="timeline">
        <svg viewBox="2 0 1916 12" preserveAspectRatio="none" aria-hidden="true"><path :d="timeTicks" class="ln" stroke="#ff0000" /></svg>
        <span v-for="d in dates" :key="d">{{ d }}</span>
      </div>

      <span class="mdi floating">
        <button v-for="b in mdiButtons" :key="b[0]" type="button" :aria-label="b[0] + ' chart'">
          <svg viewBox="0 0 14 14"><path :d="b[1]" fill="#75869c" fill-rule="evenodd" /></svg>
        </button>
      </span>
    </main>

    <div class="scrollbar">
      <button type="button" aria-label="Scroll left"><svg viewBox="0 0 5 10"><path d="M5 0v10l-5-5z" fill="#333" /></svg></button>
      <span class="track"></span>
      <span class="thumb"></span>
      <button type="button" aria-label="Scroll right"><svg viewBox="0 0 5 10"><path d="M0 0v10l5-5z" fill="#333" /></svg></button>
    </div>

    <div class="tabbar">
      <button v-for="d in tabNav" :key="d" type="button" class="nav" aria-label="Scroll tabs"><svg viewBox="0 0 14 14"><path :d="d" fill="#606060" stroke="#606060" /></svg></button>
      <button v-for="t in tabs" :key="t[0]" type="button" class="tab" :class="{ active: t[0] === 'STOX_TF30' }" :style="{ width: t[1] + 'px' }">{{ t[0] }}</button>
    </div>

    <footer class="status">
      <span class="help">For Help, press F1</span>
      <span v-for="(a, i) in account" :key="a" :class="'cell c' + i">{{ a }}</span>
      <span class="cell green order">ORDER BAR</span>
      <span class="cell green macros">MACROS</span>
      <span class="cell ball"><svg viewBox="0 0 12 14"><circle cx="6" cy="6" r="5" fill="#d00000" stroke="#400" /><circle cx="4" cy="4" r="1" fill="#fff" /></svg></span>
      <span class="cell date">26/05/2022 15:40</span>
    </footer>
    <div class="taskbar"></div>
  </div>
</template>

<style>
html, body { background: #f0f0f0; }
body { margin: 0; overflow-x: hidden; }
</style>

<style scoped>
.app { display: flex; flex-direction: column; min-height: 100vh; font-family: "Noto Sans", "Open Sans", sans-serif; color: #111; background: #f0f0f0; }
button { appearance: none; border: 0; padding: 0; margin: 0; background: none; font: inherit; color: inherit; display: flex; align-items: center; justify-content: center; flex: none; }
svg { display: block; }
.ln { fill: none; stroke-width: 1; shape-rendering: crispEdges; }

.titlebar { display: flex; align-items: center; height: 28px; border-bottom: 1px solid #303840; background: linear-gradient(180deg, rgba(255,255,255,.1) 0 70%, rgba(20,40,60,.35) 100%), linear-gradient(90deg, #6f7f92 0, #b4c0cc 50px, #8c9bad 120px, #a5b3c2 250px, #8494a8 330px, #708299 415px, #b9d0e8 425px, #c3dbf2 700px, #b2d0ee 850px, #c8e0f8 1100px, #bcd8f4 1495px, #17314c 1504px, #1b3650 100%); }
.logo { width: 18px; height: 24px; }
.titlebar h1 { margin: 0 0 0 7px; flex: 1; font-size: 14px; line-height: 28px; padding-top: 1px; font-weight: 400; white-space: nowrap; color: #000; }
.caption-buttons { display: flex; align-self: flex-start; height: 25px; margin-right: 2px; border: 1px solid #b8c4d0; border-top: 0; border-radius: 0 0 5px 5px; overflow: hidden; }
.cap { border-left: 1px solid #a0acb8; background: linear-gradient(#8d99a6 0 45%, #2c3a4a 50%, #52606e); }
.cap:first-child { border-left: 0; }
.cap svg { width: 20px; height: 18px; }
.min, .max { width: 37px; }
.close { width: 63px; background: linear-gradient(#d89a88 0 45%, #b02c14 50%, #c86048); }

.menubar { display: flex; align-items: center; height: 29px; padding-left: 7px; border-bottom: 1px solid #a0a0a0; background: linear-gradient(#fdfdff 0, #f0f2f9 30%, #d6dced 34%, #dfe5f3 100%); font-size: 14px; }
.chart-icon { width: 19px; height: 16px; margin-right: 8px; }
.menubar > button { margin-right: 14px; line-height: 24px; }
.mdi { display: flex; gap: 1px; margin-left: auto; }
.mdi button { width: 23px; height: 27px; box-sizing: border-box; border: 1px solid #9db0c4; background: linear-gradient(#dce9f7, #e8f3fc 40%, #cfe2f3); }
.mdi svg { width: 14px; height: 14px; }

.toolbar { display: flex; align-items: center; height: 28px; padding: 1px 0 0 22px; border-bottom: 1px solid #808080; background: #f0f0f0; }
.grip { width: 8px; height: 24px; flex: none; background: repeating-linear-gradient(#a8a8a8 0 2px, transparent 2px 4px) 3px 0 / 2px 100% no-repeat; }
.tool { width: 23px; height: 23px; }
.tool svg { width: 16px; height: 16px; }
.pressed { background: #fafafa; box-shadow: inset 1px 1px 0 #909090, inset -1px -1px 0 #fff; }
.abc { font-family: "Liberation Sans", sans-serif; font-size: 11px; line-height: 16px; }
.sep { width: 1px; height: 22px; margin: 0 4px 0 3px; flex: none; background: #a0a0a0; }
.gap { width: 14px; flex: none; }
.gap-wide { width: 25px; flex: none; }
.symbol { display: flex; width: 135px; height: 22px; border: 1px solid #d0d0d8; background: #fff; flex: none; }
.symbol input { flex: 1; min-width: 0; border: 0; padding: 0 0 0 3px; background: none; font: 14px "Liberation Sans", Arial, sans-serif; outline: 0; }
.symbol input::placeholder { color: #707070; opacity: 1; }
.symbol button { width: 20px; }
.symbol button svg { width: 10px; height: 6px; }
.go { width: 20px; height: 22px; margin-right: 5px; }
.go svg { width: 6px; height: 10px; }

.chart { position: relative; overflow: hidden; background: #000; border-left: 2px solid #808080; border-right: 2px solid #f0f0f0; font-family: "Liberation Sans", Arial, sans-serif; }
.pane { display: flex; }
.plot { position: relative; flex: 1; min-width: 0; }
.plot svg { width: 100%; }
.price-svg { height: 449px; }
.study-svg { height: 197px; }
.price-svg path, .price-svg line, .study-svg line { shape-rendering: crispEdges; }
.info { display: grid; margin: 0; padding-left: 1px; height: 19px; font-size: 16px; line-height: 22px; white-space: pre; }
.price-info { height: 19px; line-height: 24px; grid-template-columns: 206px 64px 91px 96px 102px 106px 98px 59px 77px 110px 77px 79px 78px 50px 146px 1fr; }
.leo-info { grid-template-columns: 90px 42px 41px 46px 41px 47px 41px 151px 1fr; }
.cci-info { grid-template-columns: 165px 59px 57px 67px 58px 119px 41px 131px 1fr; }
.signal { position: absolute; transform: translate(-50%, -50%); color: #fff; font-size: 16px; line-height: 16px; }
.level { position: absolute; right: 3px; color: #808000; font-size: 20px; line-height: 24px; }
.high { top: 120px; }
.low { top: 421px; }
.axis { position: relative; width: 78px; flex: none; box-sizing: border-box; border-left: 1px solid #ff0000; overflow: hidden; font-size: 20px; }
.pane + .pane .axis { border-top: 1px solid #ff0000; }
.tick, .tag { position: absolute; left: 0; height: 23px; margin-top: -12px; line-height: 24px; box-sizing: border-box; white-space: nowrap; }
.tick { padding-left: 7px; color: #fff; }
.tick::before { content: ""; position: absolute; left: 0; top: 12px; width: 6px; height: 1px; background: #ff0000; }
.tag { width: 100%; padding-left: 8px; color: #000; }
.timeline { position: relative; display: flex; height: 28px; box-sizing: border-box; border-top: 1px solid #ff0000; padding-left: 63px; color: #fff; font-size: 20px; line-height: 32px; }
.timeline::after { content: ""; flex: 53 1 0; }
.timeline span { flex: 72 1 0; min-width: 0; white-space: nowrap; }
.timeline svg { position: absolute; left: 0; top: 0; width: 100%; height: 12px; }
.floating { position: absolute; top: 8px; right: -9px; }

.scrollbar { display: flex; align-items: center; height: 22px; padding: 0 5px 0 8px; border-bottom: 1px solid #fff; background: linear-gradient(#e4e4e4, #f0f0f0 40%, #ededed); border-left: 1px solid #808080; }
.scrollbar button svg { width: 5px; height: 10px; }
.track { flex: 1; }
.thumb { width: 16px; height: 18px; margin-right: 8px; border: 1px solid #909090; border-radius: 2px; background: repeating-linear-gradient(90deg, #707070 0 1px, #f4f4f4 1px 4px) 3px 4px / 10px 10px no-repeat, linear-gradient(90deg, #f8f8f8, #d8d8d8); }
.scrollbar button:last-child { margin: 0 3px 0 0; }

.tabbar { display: flex; height: 17px; border-top: 1px solid #000; border-bottom: 1px solid #a0a0a0; background: #f0f0f0; overflow: hidden; font-family: "Liberation Sans", Arial, sans-serif; font-size: 12px; color: #000; }
.nav { width: 17px; height: 17px; box-sizing: border-box; border: 1px solid #909090; border-width: 0 1px 1px 0; }
.nav svg { width: 12px; height: 12px; }
.nav:nth-child(4) { margin-right: 3px; }
.tab { position: relative; height: 16px; box-sizing: border-box; border-bottom: 1px solid #000; line-height: 16px; white-space: pre; }
.tab::before { content: ""; position: absolute; left: 0; top: 0; width: 1px; height: 16px; background: #000; transform: skewX(20deg); }
.tab::after { content: ""; position: absolute; right: 0; bottom: 0; width: 1px; height: 9px; background: #000; transform: skewX(-20deg); }
.tab.active { font-weight: 700; background: #fff; border-bottom-color: #fff; }
.tab.active::after, .tab:last-child::after { height: 16px; }

.status { display: flex; align-items: stretch; height: 19px; padding: 1px 0 0 2px; background: #f0edec; font-size: 14px; line-height: 19px; white-space: nowrap; }
.help { flex: 1; }
.cell { flex: none; box-sizing: border-box; padding-left: 4px; border-left: 1px solid #c8c8c8; }
.c0 { width: 52px; border-left-color: transparent; }
.c1 { width: 92px; }
.c2 { width: 62px; }
.c3 { width: 87px; }
.c4 { width: 93px; }
.c5 { width: 60px; }
.c6 { width: 84px; }
.green { color: #1d7f1d; }
.order { width: 88px; }
.macros { width: 68px; }
.ball { width: 19px; padding: 1px 0 0 2px; }
.ball svg { width: 12px; height: 14px; }
.date { width: 124px; }
.taskbar { height: 2px; flex: 1; background: linear-gradient(#405068 0 1px, #b8c8dc 1px); }
</style>
